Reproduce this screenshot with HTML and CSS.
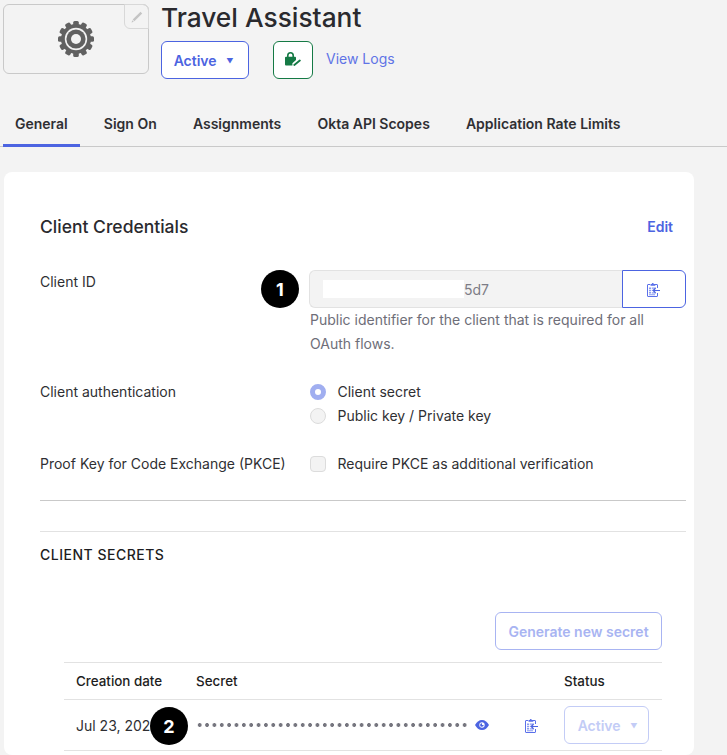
FILE: index.html
```html
<!DOCTYPE html>
<html lang="en">
<head>
  <meta charset="UTF-8">
  <title>Travel Assistant</title>
  <link rel="stylesheet" href="styles.css">
</head>
<body>
  <header class="app-header">
    <div class="app-logo">
      <svg class="gear" width="36" height="36" viewBox="0 0 36 36">
        <g fill="#616161">
          <rect x="15.2" y="0" width="5.6" height="36" rx="1.5"/>
          <rect x="15.2" y="0" width="5.6" height="36" rx="1.5" transform="rotate(30 18 18)"/>
          <rect x="15.2" y="0" width="5.6" height="36" rx="1.5" transform="rotate(60 18 18)"/>
          <rect x="15.2" y="0" width="5.6" height="36" rx="1.5" transform="rotate(90 18 18)"/>
          <rect x="15.2" y="0" width="5.6" height="36" rx="1.5" transform="rotate(120 18 18)"/>
          <rect x="15.2" y="0" width="5.6" height="36" rx="1.5" transform="rotate(150 18 18)"/>
          <circle cx="18" cy="18" r="15"/>
        </g>
        <circle cx="18" cy="18" r="11.2" fill="#f3f3f3"/>
        <circle cx="18" cy="18" r="9.6" fill="#616161"/>
        <circle cx="18" cy="18" r="5" fill="#f3f3f3"/>
      </svg>
      <span class="logo-edit">
        <svg width="12" height="12" viewBox="0 0 12 12"><path d="M9.5 .8 11.2 2.5 3.4 10.2 1.7 8.5Z" fill="#c4c4c4"/><path d="M1.2 9.2 2.8 10.8 .6 11.4Z" fill="#c4c4c4"/></svg>
      </span>
    </div>
    <div class="app-info">
      <h1>Travel Assistant</h1>
      <div class="app-actions">
        <button class="btn btn-status">Active <span class="caret">▼</span></button>
        <button class="btn btn-lock">
          <svg width="16" height="14" viewBox="0 0 16 14">
            <path d="M2 4.800V3.500a3.500 3.500 0 0 1 7 0v1.300h1a1 1 0 0 1 1 1V8L7.400 11.200V13.500H1a1 1 0 0 1-1-1V5.800a1 1 0 0 1 1-1Zm1.600 0h3.800V3.500a1.900 1.900 0 0 0-3.800 0Z" fill="#157a45" fill-rule="evenodd"/>
            <path d="M9.300 12.900 14.800 8.600" stroke="#157a45" stroke-width="1.900" stroke-linecap="round"/>
          </svg>
        </button>
        <a class="view-logs" href="#">View Logs</a>
      </div>
    </div>
  </header>

  <nav class="tabs">
    <a class="tab tab-active" href="#">General</a>
    <a class="tab" href="#">Sign On</a>
    <a class="tab" href="#">Assignments</a>
    <a class="tab" href="#">Okta API Scopes</a>
    <a class="tab" href="#">Application Rate Limits</a>
  </nav>

  <main class="card">
    <div class="card-head">
      <h2>Client Credentials</h2>
      <a class="edit" href="#">Edit</a>
    </div>

    <div class="field field-client">
      <label>Client ID</label>
      <div class="field-body">
        <div class="copy-input">
          <div class="copy-value"><span class="redact"></span>5d7</div>
          <button class="copy-btn">
            <svg class="clip" width="13" height="15" viewBox="0 0 13 15"><use href="#clip-icon"/></svg>
          </button>
        </div>
        <p class="hint">Public identifier for the client that is required for all OAuth flows.</p>
      </div>
      <span class="marker marker-one">1</span>
    </div>

    <div class="field field-auth">
      <label>Client authentication</label>
      <div class="field-body options">
        <div class="option"><span class="radio radio-on"></span>Client secret</div>
        <div class="option"><span class="radio"></span>Public key / Private key</div>
      </div>
    </div>

    <div class="field field-pkce">
      <label>Proof Key for Code Exchange (PKCE)</label>
      <div class="field-body options">
        <div class="option"><span class="checkbox"></span>Require PKCE as additional verification</div>
      </div>
    </div>

    <hr class="rule">
    <hr class="rule rule-second">

    <h3>CLIENT SECRETS</h3>

    <div class="secrets-actions">
      <button class="btn btn-generate">Generate new secret</button>
    </div>

    <div class="secrets">
      <div class="row row-head">
        <span class="col-date">Creation date</span>
        <span class="col-secret">Secret</span>
        <span class="col-status">Status</span>
      </div>
      <div class="row row-body">
        <span class="col-date">Jul 23, 2024</span>
        <span class="col-secret secret-cell">
          <span class="dots"></span>
          <svg class="eye" width="14" height="10" viewBox="0 0 14 10">
            <path d="M7 0c3 0 5.400 2 7 5-1.600 3-4 5-7 5S1.600 8 0 5c1.600-3 4-5 7-5Z" fill="#4c64e1"/>
            <circle cx="7" cy="5" r="2.700" fill="#fff"/>
            <path d="M7 3.200V5h1.700A1.800 1.800 0 1 1 7 3.200Z" fill="#4c64e1"/>
          </svg>
          <svg class="clip clip-row" width="13" height="15" viewBox="0 0 13 15"><use href="#clip-icon"/></svg>
        </span>
        <span class="col-status"><button class="btn btn-row-status">Active <span class="caret">▼</span></button></span>
      </div>
      <span class="marker marker-two">2</span>
    </div>
  </main>

  <svg class="defs" width="0" height="0">
    <symbol id="clip-icon" viewBox="0 0 13 15">
      <path d="M3 2.500H1a.5.500 0 0 0-.5.500v11a.5.500 0 0 0 .5.500h9a.5.500 0 0 0 .5-.5V11M10.500 6V3a.5.500 0 0 0-.5-.5H8" fill="none" stroke="#5a70ea"/>
      <path d="M3.500 3.800V2h1.300a1 1 0 0 1 1.800-.6 1 1 0 0 1 .4.600h1.300v1.800Z" fill="#5a70ea"/>
      <path d="M2 5.500h2v1.500H2ZM4.800 5.500h4.200v1.200H4.800ZM2 7.800h2v1.500H2ZM4.800 7.800h1v1.200h-1ZM2 10.100h2v1.500H2ZM4.800 10.300h4.200v1.200H4.800ZM2 12.300h6v1H2Z" fill="#8c9cf0"/>
      <path d="M13 8.500H6.300M8.500 6.300 6.200 8.500l2.300 2.200" fill="none" stroke="#4c64e1" stroke-width="1.200"/>
    </symbol>
  </svg>
</body>
</html>
```

FILE: styles.css
```css
html, body {
  height: 755px;
  overflow: hidden;
}

body {
  margin: 0;
  background-color: #f3f3f3;
  color: #1d1d21;
  font-family: Inter, "Liberation Sans", sans-serif;
  font-size: 14px;
}

a {
  text-decoration: none;
}

.defs {
  position: absolute;
}

.app-header {
  display: flex;
  gap: 12px;
  padding: 4px 0 0 3px;
}

.app-logo {
  position: relative;
  display: flex;
  align-items: center;
  justify-content: center;
  width: 146px;
  height: 70px;
  box-sizing: border-box;
  border: 1px solid #c9c9c9;
  border-radius: 6px;
}

.logo-edit {
  position: absolute;
  top: -1px;
  right: -1px;
  display: flex;
  align-items: center;
  justify-content: center;
  width: 25px;
  height: 25px;
  box-sizing: border-box;
  border: 1px solid #d8d8d8;
  border-radius: 0 6px 0 6px;
}

.app-info h1 {
  margin: -1px 0 0;
  font-size: 26.3px;
  font-weight: 500;
  line-height: 29px;
  color: #2a2a2e;
}

.app-actions {
  display: flex;
  align-items: flex-start;
  margin-top: 9px;
}

.btn {
  box-sizing: border-box;
  height: 38px;
  border-radius: 6px;
  background: transparent;
  font-family: inherit;
  font-size: 14px;
  font-weight: 600;
}

.caret {
  margin-left: 6px;
  font-size: 7px;
  vertical-align: 2px;
}

.btn-status {
  width: 88px;
  padding-right: 9px;
  border: 1px solid #4c64e1;
  color: #4c64e1;
  background: #fff;
}

.btn-lock {
  display: flex;
  align-items: center;
  justify-content: center;
  width: 40px;
  margin-left: 24px;
  padding: 0 1px 3px 0;
  border: 1px solid #157a45;
  background: #fff;
}

.view-logs {
  margin: 9px 0 0 13px;
  color: #5f74e6;
  line-height: 17px;
}

.tabs {
  display: flex;
  gap: 36.1px;
  height: 41px;
  margin-top: 26px;
  padding: 0 0 0 15px;
  border-bottom: 1px solid #c9c9c9;
}

.tab {
  position: relative;
  color: #2f2f33;
  font-size: 14px;
  font-weight: 600;
  line-height: 38px;
}

.tab-active::after {
  content: "";
  position: absolute;
  left: -12px;
  right: -12px;
  bottom: -1px;
  height: 3px;
  background: #4c64e1;
}

.card {
  position: relative;
  width: 690px;
  height: 583px;
  box-sizing: border-box;
  margin: 25px 0 0 4px;
  padding: 0 8px 0 36px;
  background: #fff;
  border-radius: 8px;
}

.card-head {
  display: flex;
  align-items: center;
  justify-content: space-between;
  padding: 43px 13px 0 0;
  line-height: 23px;
}

.card-head h2 {
  margin: 0;
  font-size: 17.5px;
  font-weight: 500;
  color: #2a2a2e;
}

.edit {
  color: #4c64e1;
  font-weight: 600;
}

.field {
  position: relative;
  display: flex;
}

.field label {
  width: 269px;
  flex: none;
  color: #2f2f33;
  line-height: 20px;
}

.field-client {
  margin-top: 32px;
}

.field-client label {
  padding-top: 2px;
}

.field-body {
  flex: 1;
}

.copy-input {
  display: flex;
  height: 38px;
}

.copy-value {
  flex: 1;
  display: flex;
  align-items: center;
  padding-left: 13px;
  box-sizing: border-box;
  border: 1px solid #e2e2e2;
  border-right: 0;
  border-radius: 6px 0 0 6px;
  background: #f3f3f3;
  color: #7c7c86;
}

.redact {
  width: 141px;
  height: 18px;
  background: #fff;
}

.copy-btn {
  display: flex;
  align-items: center;
  justify-content: center;
  width: 64px;
  padding: 0 2px 0 0;
  background: #fff;
  border: 1px solid #4c64e1;
  border-radius: 0 6px 6px 0;
}

.hint {
  margin: 0;
  padding-left: 1px;
  color: #6e6e78;
  line-height: 24px;
}

.marker {
  position: absolute;
  display: flex;
  align-items: center;
  justify-content: center;
  width: 38px;
  height: 38px;
  border-radius: 50%;
  background: #000;
  color: #fff;
  font-size: 18px;
  font-weight: 700;
}

.marker-one {
  left: 221px;
  top: 0;
}

.marker-two {
  left: 86px;
  bottom: 6px;
}

.field-auth {
  margin-top: 26px;
}

.options {
  display: flex;
  flex-direction: column;
  gap: 4px;
  margin-top: -1px;
  padding-left: 1px;
}

.option {
  display: flex;
  align-items: center;
  gap: 11.5px;
  height: 20px;
  color: #2f2f33;
}

.radio {
  width: 16px;
  height: 16px;
  margin-top: 2px;
  box-sizing: border-box;
  border: 1px solid #dcdcdc;
  border-radius: 50%;
  background: #f3f3f3;
}

.radio-on {
  border: 5px solid #a0aef0;
  background: #fff;
}

.checkbox {
  width: 16px;
  height: 16px;
  margin-top: 2px;
  box-sizing: border-box;
  border: 1px solid #dcdcdc;
  border-radius: 4px;
  background: #f3f3f3;
}

.field-pkce {
  margin-top: 29px;
}

.rule {
  height: 1px;
  margin: 26px 0 0;
  border: 0;
  background: #c9c9c9;
}

.rule-second {
  margin-top: 30px;
  background: #e2e2e2;
}

.card h3 {
  margin: 14px 0 0;
  font-size: 14px;
  font-weight: 500;
  line-height: 17px;
  letter-spacing: 0.5px;
  color: #1d1d21;
}

.secrets-actions {
  display: flex;
  justify-content: flex-end;
  margin: 49px 24px 0 0;
}

.btn-generate {
  width: 167px;
  border: 1px solid #a8b4f2;
  color: #a8b4f2;
  background: #fff;
}

.secrets {
  position: relative;
  margin: 12px 24px 0 24px;
  border-top: 1px solid #e2e2e2;
}

.row {
  display: flex;
  align-items: center;
  padding-left: 12px;
  border-bottom: 1px solid #e2e2e2;
}

.row-head {
  height: 36px;
  font-size: 13.400px;
  font-weight: 500;
}

.row-body {
  height: 50px;
  color: #2f2f33;
}

.col-date {
  width: 120px;
  flex: none;
  white-space: nowrap;
}

.col-secret {
  width: 368px;
  flex: none;
}

.secret-cell {
  display: flex;
  align-items: center;
}

.dots {
  width: 272px;
  height: 6px;
  flex: none;
  background-image: radial-gradient(circle, #76767f 1.600px, transparent 2.200px);
  background-size: 7.370px 6px;
}

.eye {
  margin-left: 7px;
}

.clip-row {
  margin-left: 36px;
}

.btn-row-status {
  width: 85px;
  padding-left: 8px;
  border: 1px solid #c3ccf6;
  color: #c3ccf6;
  background: #fff;
}
```
